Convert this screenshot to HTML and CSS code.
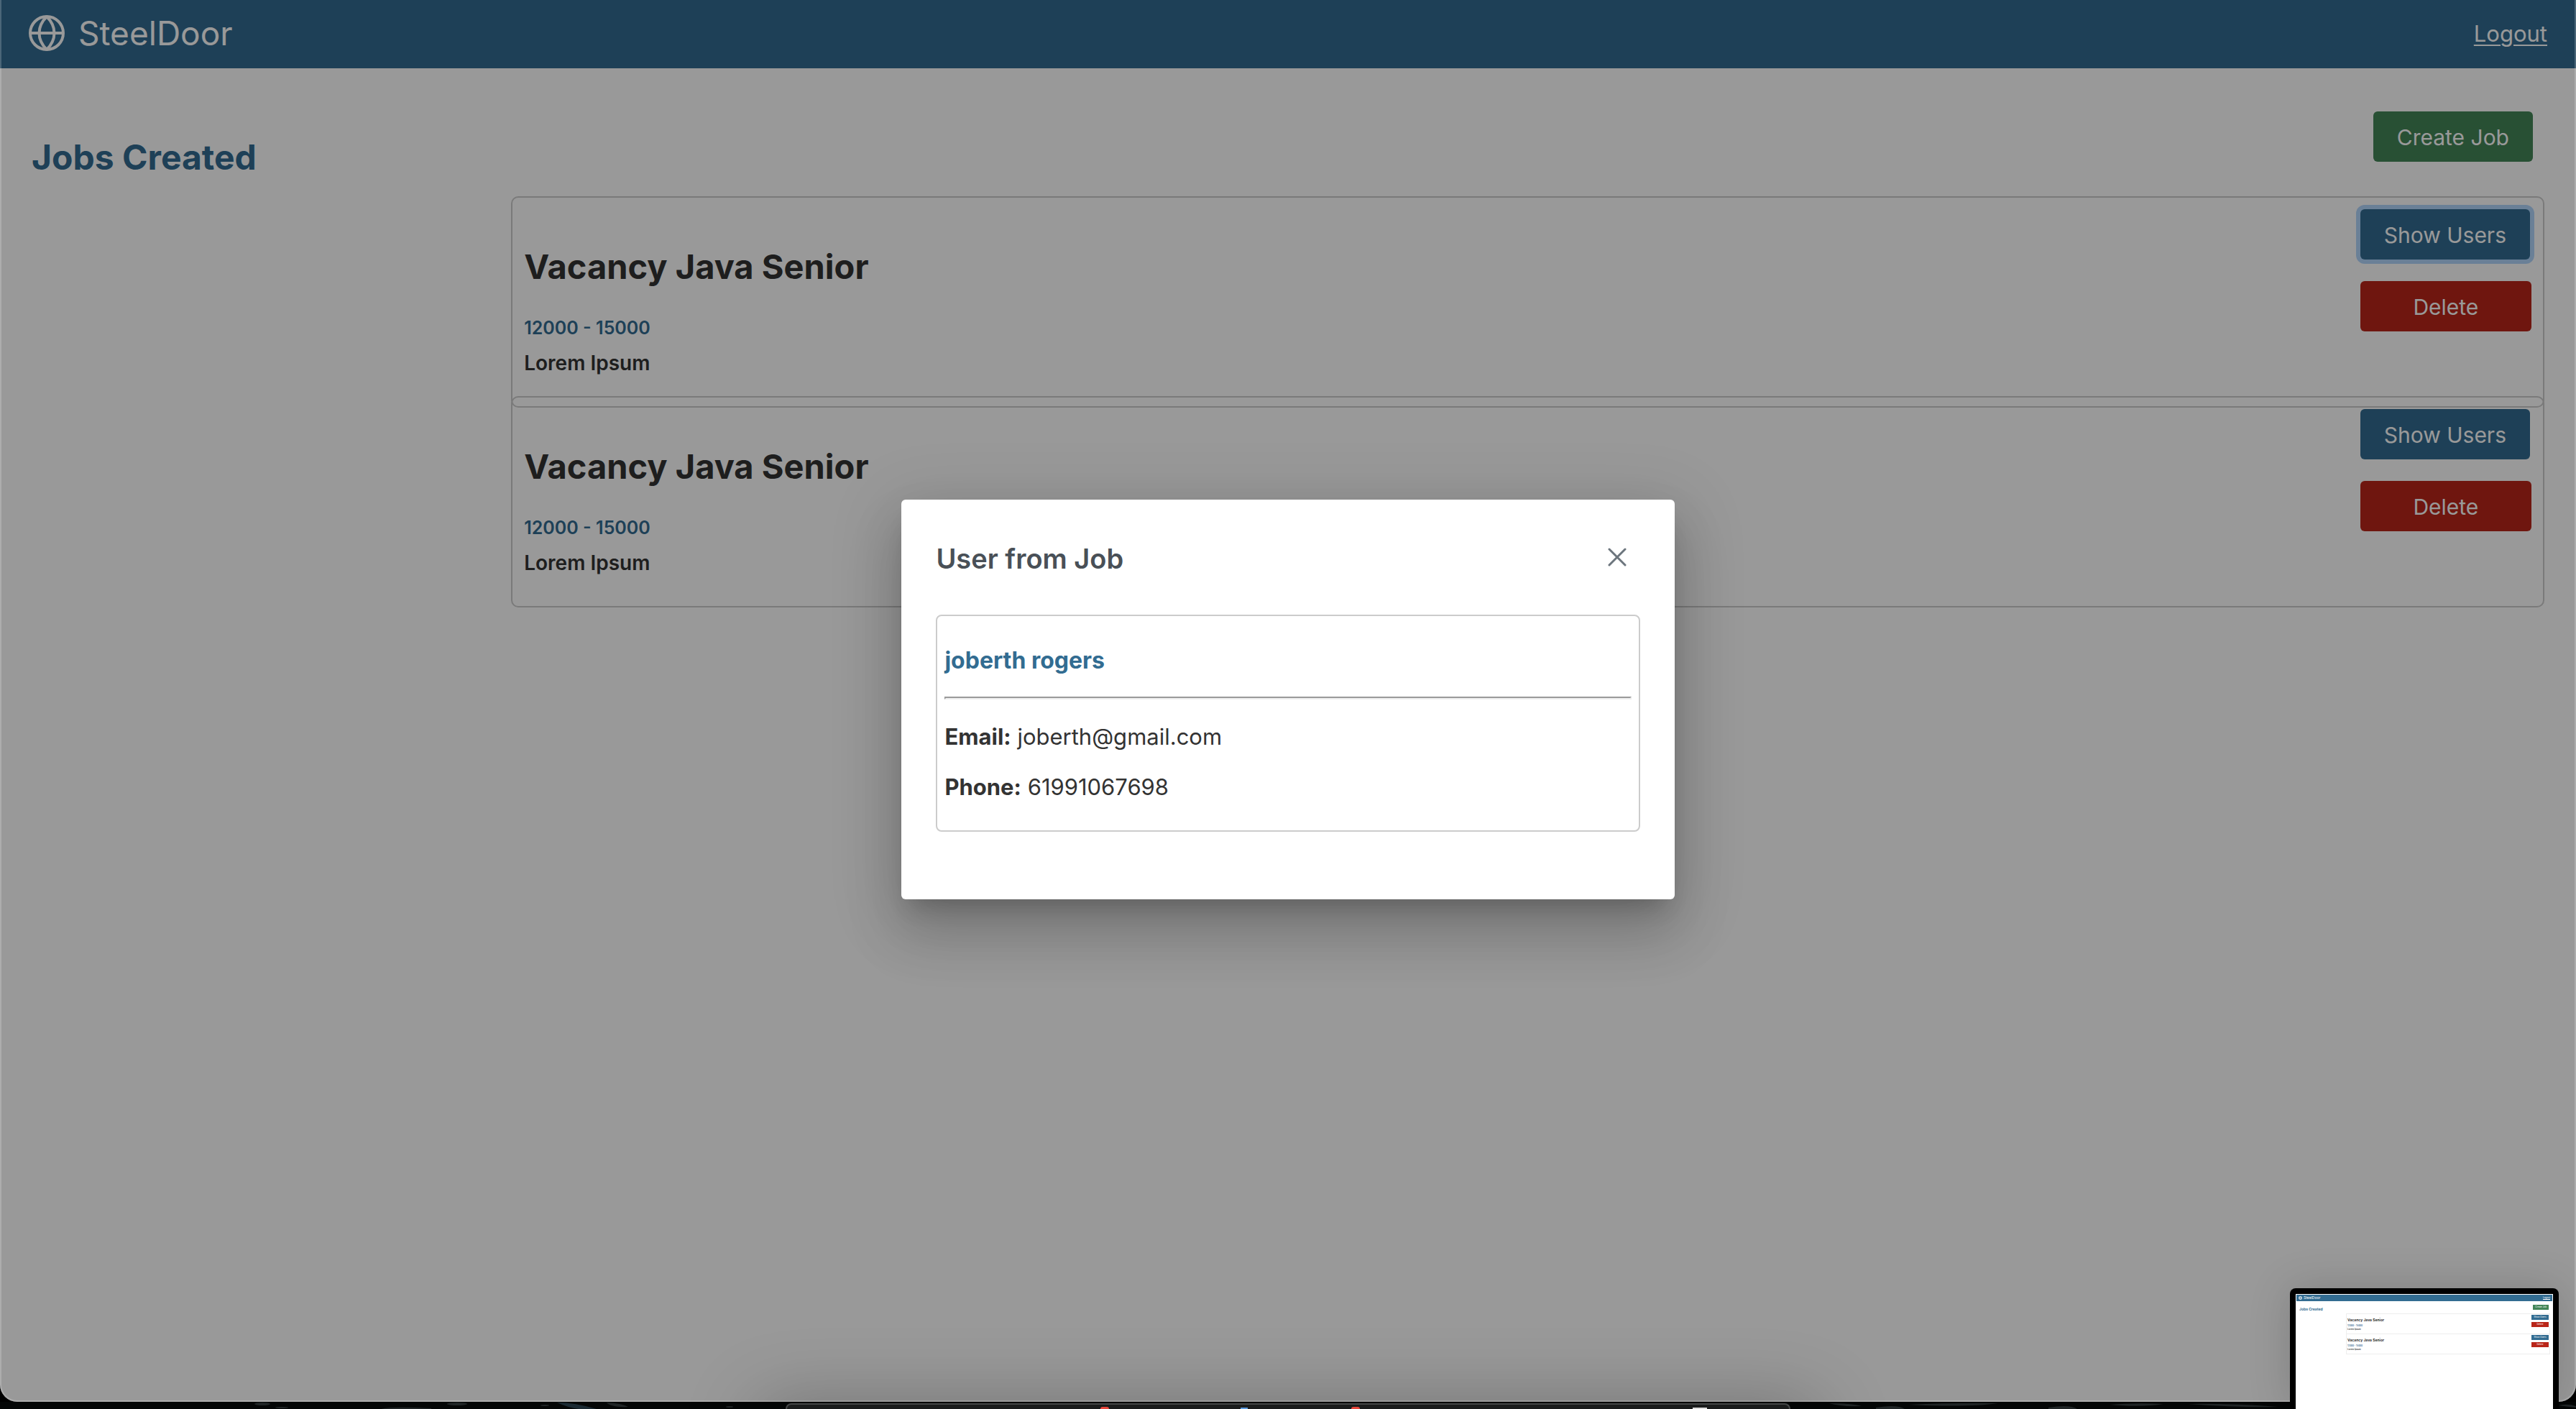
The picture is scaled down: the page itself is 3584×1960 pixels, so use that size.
FILE: index.html
```html
<!DOCTYPE html>
<html lang="en">
<head>
<meta charset="utf-8">
<title>SteelDoor</title>
<link rel="stylesheet" href="styles.css">
</head>
<body>
<div class="window">
  <header class="topbar">
    <div class="brand">
      <svg class="brand-icon" viewBox="0 0 50 50" fill="none" stroke="currentColor" stroke-width="4" aria-hidden="true">
        <circle cx="25" cy="25" r="23"/>
        <path d="M2 25H48M25 2C11 16 11 34 25 48M25 2C39 16 39 34 25 48"/>
      </svg>
      <span>SteelDoor</span>
    </div>
    <a class="logout" href="#">Logout</a>
  </header>

  <main class="page">
    <div class="toolbar">
      <h1 class="heading">Jobs Created</h1>
      <button class="btn btn-create" type="button">Create Job</button>
    </div>
    <section class="jobs">
      <article class="job">
        <div class="job-info">
          <h2 class="job-title">Vacancy Java Senior</h2>
          <p class="salary">12000 - 15000</p>
          <p class="description">Lorem Ipsum</p>
        </div>
        <div class="job-actions">
          <button class="btn btn-show is-focused" type="button">Show Users</button>
          <button class="btn btn-delete" type="button">Delete</button>
        </div>
      </article>
      <article class="job">
        <div class="job-info">
          <h2 class="job-title">Vacancy Java Senior</h2>
          <p class="salary">12000 - 15000</p>
          <p class="description">Lorem Ipsum</p>
        </div>
        <div class="job-actions">
          <button class="btn btn-show" type="button">Show Users</button>
          <button class="btn btn-delete" type="button">Delete</button>
        </div>
      </article>
    </section>
  </main>

  <div class="mask">
    <div class="dialog" role="dialog" aria-labelledby="dialog-title">
      <div class="dialog-head">
        <h2 class="dialog-title" id="dialog-title">User from Job</h2>
        <button class="dialog-close" type="button" aria-label="Close">
          <svg viewBox="0 0 26 26" fill="none" stroke="currentColor" stroke-width="3" stroke-linecap="round"><path d="M2 2L24 24M24 2L2 24"/></svg>
        </button>
      </div>
      <div class="user">
        <h3 class="user-name">joberth rogers</h3>
        <hr class="rule">
        <p class="user-line"><b>Email:</b> joberth@gmail.com</p>
        <p class="user-line"><b>Phone:</b> 61991067698</p>
      </div>
    </div>
  </div>
</div>

<div class="desktop">
  <svg class="wallpaper" viewBox="0 0 3584 10" preserveAspectRatio="none" fill="#202526" aria-hidden="true">
    <ellipse cx="365" cy="3" rx="11" ry="2"/><ellipse cx="392" cy="8" rx="9" ry="1"/>
    <path d="M530 10Q545 6 600 9V10Z"/><ellipse cx="636" cy="3" rx="14" ry="2"/>
    <ellipse cx="758" cy="5" rx="6" ry="1"/><path d="M775 1Q800 1 830 10H805Q790 8 775 1Z" fill="#1b2a33"/>
    <path d="M844 1Q865 2 874 7Q850 8 844 1Z"/><ellipse cx="1015" cy="7" rx="5" ry="1"/>
    <path d="M2545 2Q2575 2 2590 6Q2560 7 2545 2ZM2610 8Q2640 3 2650 10H2610ZM2655 4Q2720 1 2780 2Q2740 8 2655 4ZM2850 8Q2880 3 2890 10H2850ZM2935 4Q2970 1 3010 3Q2980 8 2935 4ZM3045 3Q3100 2 3170 7Q3110 8 3045 3ZM3560 5Q3572 2 3584 6V8Q3572 7 3560 5Z"/>
  </svg>
  <div class="dock">
    <i class="badge"></i><i class="tile"></i><i class="badge"></i><i class="paper"></i>
  </div>
</div>

<aside class="preview" aria-label="Screenshot preview">
  <div class="mini">
    <div class="mini-bar">
      <svg class="mini-globe" viewBox="0 0 50 50" fill="none" stroke="currentColor" stroke-width="6"><circle cx="25" cy="25" r="22"/><path d="M2 25H48M25 2C11 16 11 34 25 48M25 2C39 16 39 34 25 48"/></svg>
      <span class="mini-brand">SteelDoor</span>
      <span class="mini-logout">Logout</span>
    </div>
    <div class="mini-tools"><span class="mini-heading">Jobs Created</span><span class="mini-btn green">Create Job</span></div>
    <div class="mini-job">
      <div class="mini-info"><span class="mini-title">Vacancy Java Senior</span><span class="mini-salary">12000 - 15000</span><span>Lorem Ipsum</span></div>
      <div class="mini-actions"><span class="mini-btn blue">Show Users</span><span class="mini-btn red">Delete</span></div>
    </div>
    <div class="mini-job">
      <div class="mini-info"><span class="mini-title">Vacancy Java Senior</span><span class="mini-salary">12000 - 15000</span><span>Lorem Ipsum</span></div>
      <div class="mini-actions"><span class="mini-btn blue">Show Users</span><span class="mini-btn red">Delete</span></div>
    </div>
  </div>
</aside>
</body>
</html>
```
FILE: styles.css
```css
* { box-sizing: border-box; }

:root {
  --primary: #326c91;
  --green: #438557;
  --red: #b92619;
  --text: #333;
}

body {
  margin: 0;
  height: 100vh;
  display: flex;
  flex-direction: column;
  overflow: hidden;
  position: relative;
  background: #000;
  color: var(--text);
  font: 31px/38px Inter, "Liberation Sans", sans-serif;
}

h1, h2, h3, p { margin: 0; }
button { font: inherit; border: 0; cursor: pointer; }

/* Browser window */
.window {
  flex: 1;
  position: relative;
  overflow: hidden;
  background: #fff;
  border-radius: 0 0 24px 24px;
}
.window::after {
  content: "";
  position: absolute;
  inset: -2px 0 0;
  border: 2px solid rgba(255, 255, 255, .2);
  border-radius: 0 0 24px 24px;
  pointer-events: none;
}

.topbar {
  display: flex;
  justify-content: space-between;
  align-items: center;
  height: 95px;
  padding: 0 40px 3px;
  background: var(--primary);
  color: #fff;
}
.brand {
  display: flex;
  align-items: center;
  gap: 19px;
  font-size: 46px;
}
.brand-icon { width: 50px; height: 50px; }
.logout {
  padding-top: 2px;
  color: inherit;
  text-decoration-thickness: 2px;
  text-underline-offset: 4px;
}

.page {
  display: flex;
  flex-direction: column;
  padding: 60px 44px 0 4px;
}
.toolbar {
  display: flex;
  justify-content: space-between;
  align-items: flex-start;
  padding: 0 16px 24px 40px;
}
.heading {
  margin-top: 34px;
  font-size: 48px;
  line-height: 60px;
  font-weight: 700;
  color: var(--primary);
}

.btn {
  height: 70px;
  padding: 2px 33px 0;
  border-radius: 6px;
  font-size: 30px;
  color: #fff;
}
.btn-create { background: var(--green); }
.btn-show { background: var(--primary); margin-right: 2px; }
.btn-delete { background: var(--red); }
.is-focused { box-shadow: 0 0 0 6px #b1d5fc; }

.jobs {
  width: 80%;
  align-self: flex-end;
}
.job {
  display: flex;
  justify-content: space-between;
  padding: 16px;
  border: 2px solid #ccc;
  border-radius: 10px;
}
.job + .job { margin-top: -16px; }
.job-info { padding: 50px 0 27px; }
.job-title {
  font-size: 47px;
  line-height: 60px;
  font-weight: 700;
}
.salary {
  margin-top: 41px;
  font-size: 25px;
  line-height: 28px;
  font-weight: 600;
  color: var(--primary);
}
.description {
  margin-top: 18px;
  font-size: 28px;
  line-height: 34px;
  font-weight: 600;
}
.job-actions {
  display: flex;
  flex-direction: column;
  gap: 30px;
}

/* Modal */
.mask {
  position: absolute;
  inset: 0;
  display: flex;
  align-items: center;
  justify-content: center;
  padding-bottom: 4px;
  background: rgba(0, 0, 0, .4);
}
.dialog {
  width: 30%;
  padding: 48px 48px 94px;
  border-radius: 6px;
  background: #fff;
  box-shadow: 0 22px 30px -14px rgba(0, 0, 0, .2), 0 48px 76px 6px rgba(0, 0, 0, .14), 0 18px 92px 16px rgba(0, 0, 0, .12);
}
.dialog-head {
  display: flex;
  justify-content: space-between;
  align-items: center;
  height: 64px;
  margin-bottom: 48px;
}
.dialog-title {
  padding-top: 4px;
  font-size: 38px;
  line-height: 48px;
  font-weight: 600;
  color: #495057;
}
.dialog-close {
  display: grid;
  place-items: center;
  width: 64px;
  height: 64px;
  padding: 0;
  background: none;
  color: #6c757d;
}
.dialog-close svg { width: 26px; height: 26px; }
.user {
  display: flex;
  flex-direction: column;
  gap: 32px;
  padding: 42px 10px;
  border: 2px solid #ccc;
  border-radius: 8px;
}
.user-name, .user-line {
  padding-top: 2px;
  line-height: 36px;
}
.user-name {
  font-size: 32px;
  font-weight: 700;
  color: var(--primary);
}
.rule {
  width: 100%;
  margin: 0;
  border: 2px solid;
  border-color: #9a9a9a #eee #eee #9a9a9a;
}

/* Desktop strip below the window */
.desktop {
  position: relative;
  flex: none;
  height: 10px;
  display: flex;
  justify-content: center;
  align-items: flex-end;
  background: #040606;
}
.wallpaper {
  position: absolute;
  inset: 0;
  width: 100%;
  height: 100%;
}
.dock {
  position: relative;
  flex: none;
  width: 39%;
  height: 8px;
  display: flex;
  align-items: flex-end;
  padding-left: 436px;
  border: 2px solid #454747;
  border-bottom: 0;
  border-radius: 12px 12px 0 0;
  background: #1a1c1c;
  box-shadow: 0 40px 100px 40px rgba(0, 0, 0, .26);
}
.badge { width: 12px; height: 3px; border-radius: 6px 6px 0 0; background: #e8473c; }
.tile { width: 10px; height: 2px; margin: 0 144px 0 183px; background: #5b9be0; }
.paper { width: 20px; height: 2px; margin-left: 463px; background: #ddd; }

/* Floating screenshot thumbnail */
.preview {
  position: absolute;
  right: 24px;
  bottom: 0;
  width: 374px;
  height: 168px;
  padding: 8px 8px 0;
  border-radius: 8px 8px 0 0;
  background: #000;
  box-shadow: 0 0 60px rgba(0, 0, 0, .16);
}
.mini {
  height: 100%;
  padding: 1px 1px 0;
  background: #fff;
  font-size: 3px;
  line-height: 5px;
}
.mini-bar {
  display: flex;
  align-items: center;
  gap: 2px;
  height: 9px;
  padding: 0 3px;
  background: var(--primary);
  color: #fff;
}
.mini-globe { width: 5px; height: 5px; }
.mini-brand { font-size: 5px; }
.mini-logout { margin-left: auto; text-decoration: underline; }
.mini-tools {
  display: flex;
  justify-content: space-between;
  align-items: flex-start;
  height: 17px;
  padding: 5px 5px 0 4px;
}
.mini-heading, .mini-title { font-size: 5px; font-weight: 700; }
.mini-heading { margin-top: 4px; color: var(--primary); }
.mini-btn {
  height: 7px;
  padding: 1px 3px;
  color: #fff;
  text-align: center;
}
.green { background: var(--green); }
.blue { background: var(--primary); }
.red { background: var(--red); }
.mini-job {
  display: flex;
  justify-content: space-between;
  height: 29px;
  width: 284px;
  margin: 0 3px 0 auto;
  padding: 1px;
  border: 1px solid #eee;
}
.mini-job + .mini-job { margin-top: -1px; }
.mini-info { display: flex; flex-direction: column; padding-top: 5px; font-weight: 600; }
.mini-title { margin-bottom: 3px; }
.mini-salary { color: var(--primary); }
.mini-actions { display: flex; flex-direction: column; gap: 3px; width: 24px; }
```
